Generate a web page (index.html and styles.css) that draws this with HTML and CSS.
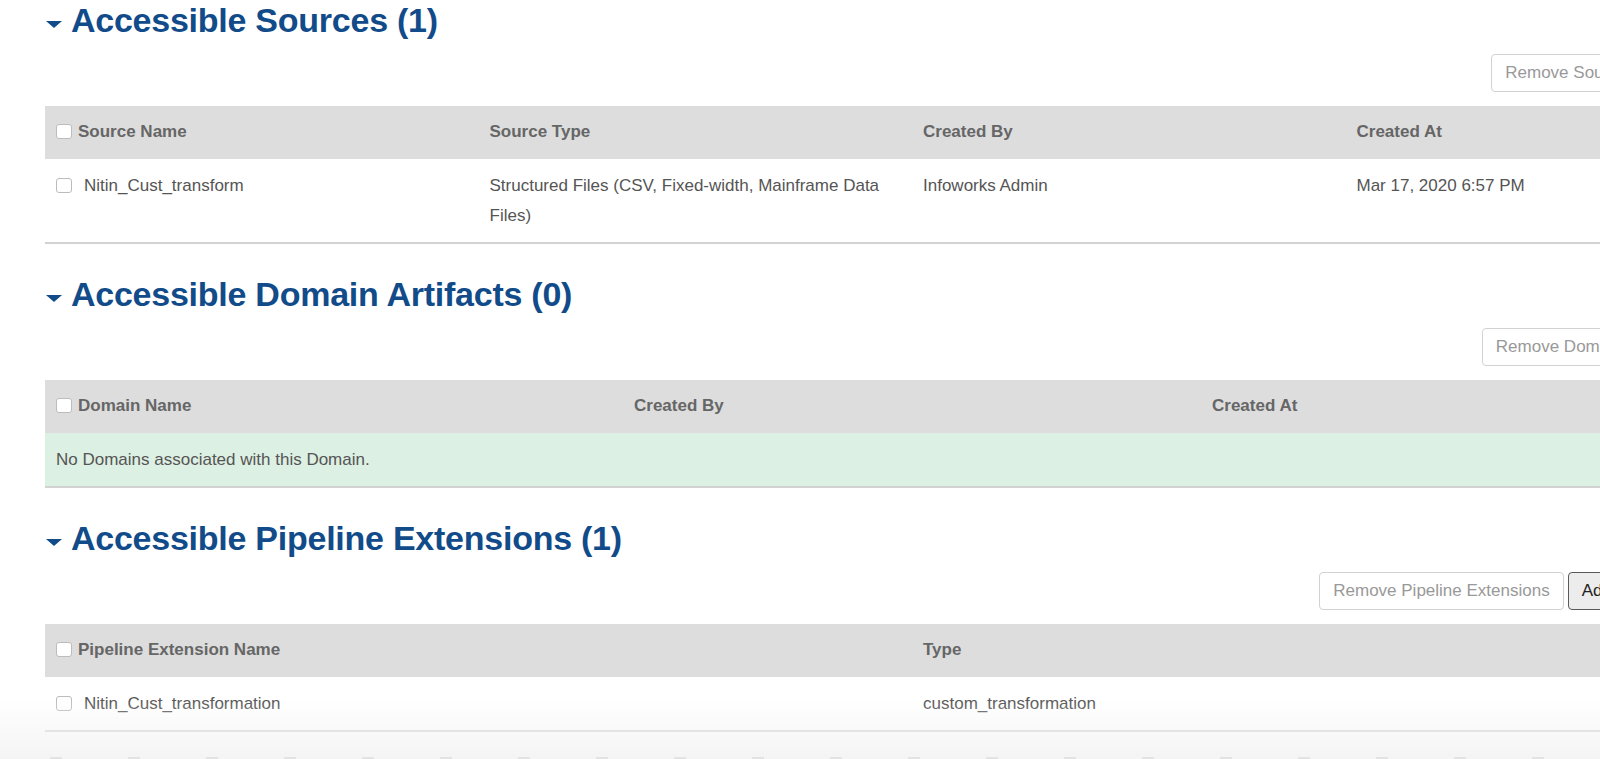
FILE: index.html
```html
<!DOCTYPE html>
<html lang="en">
<head>
    <meta charset="UTF-8">
    <meta name="viewport" content="width=device-width, initial-scale=1.0">
    <title>Domain Access</title>
    <link rel="stylesheet" href="styles.css">
</head>
<body>

<div class="page">

    <!-- Sources -->
    <section class="panel">
        <h2 class="panel-title"><span class="caret"></span>Accessible Sources (1)</h2>
        <div class="panel-actions">
            <button class="btn">Remove Sources</button>
            <button class="btn btn-add">Add Sources</button>
        </div>
        <table class="grid">
            <colgroup>
                <col style="width: 25%"><col style="width: 25%"><col style="width: 25%"><col style="width: 25%">
            </colgroup>
            <thead>
                <tr>
                    <th><input type="checkbox" class="check">Source Name</th>
                    <th>Source Type</th>
                    <th>Created By</th>
                    <th>Created At</th>
                </tr>
            </thead>
            <tbody>
                <tr>
                    <td><input type="checkbox" class="check">Nitin_Cust_transform</td>
                    <td>Structured Files (CSV, Fixed-width, Mainframe Data Files)</td>
                    <td>Infoworks Admin</td>
                    <td>Mar 17, 2020 6:57 PM</td>
                </tr>
            </tbody>
        </table>
    </section>

    <!-- Domain artifacts -->
    <section class="panel">
        <h2 class="panel-title"><span class="caret"></span>Accessible Domain Artifacts (0)</h2>
        <div class="panel-actions">
            <button class="btn">Remove Domains</button>
            <button class="btn btn-add">Add Domains</button>
        </div>
        <table class="grid">
            <colgroup>
                <col style="width: 33.333%"><col style="width: 33.333%"><col style="width: 33.333%">
            </colgroup>
            <thead>
                <tr>
                    <th><input type="checkbox" class="check">Domain Name</th>
                    <th>Created By</th>
                    <th>Created At</th>
                </tr>
            </thead>
            <tbody>
                <tr class="empty-row">
                    <td colspan="3">No Domains associated with this Domain.</td>
                </tr>
            </tbody>
        </table>
    </section>

    <!-- Pipeline extensions -->
    <section class="panel">
        <h2 class="panel-title"><span class="caret"></span>Accessible Pipeline Extensions (1)</h2>
        <div class="panel-actions">
            <button class="btn">Remove Pipeline Extensions</button>
            <button class="btn btn-add">Add Pipeline Extensions</button>
        </div>
        <table class="grid">
            <colgroup>
                <col style="width: 50%"><col style="width: 50%">
            </colgroup>
            <thead>
                <tr>
                    <th><input type="checkbox" class="check">Pipeline Extension Name</th>
                    <th>Type</th>
                </tr>
            </thead>
            <tbody>
                <tr>
                    <td><input type="checkbox" class="check">Nitin_Cust_transformation</td>
                    <td>custom_transformation</td>
                </tr>
            </tbody>
        </table>
    </section>

</div>

<div class="bottom-fade"></div>

</body>
</html>
```

FILE: styles.css
```css
html, body {
    margin: 0;
    overflow: hidden;
    background: #fff;
}

body {
    font-family: "Liberation Sans", Arial, sans-serif;
    font-size: 17px;
    color: #555;
}

.page {
    width: 1734px;
    padding-left: 45px;
}

.panel {
    margin-top: 30px;
}

.panel:first-child {
    margin-top: 0;
}

.panel-title {
    display: flex;
    align-items: center;
    margin: 0;
    padding-left: 1px;
    height: 40px;
    line-height: 40px;
    font-size: 34px;
    font-weight: bold;
    letter-spacing: -0.25px;
    color: #124b89;
}

.caret {
    width: 0;
    height: 0;
    margin: 8px 9px 0 0;
    border-left: 8px solid transparent;
    border-right: 8px solid transparent;
    border-top: 7px solid #124b89;
}

.panel-actions {
    display: flex;
    justify-content: flex-end;
    gap: 4px;
    margin: 14px 0;
}

.btn {
    font-family: inherit;
    font-size: 17px;
    height: 38px;
    padding: 0 13px;
    border: 1px solid #d2d2d2;
    border-radius: 4px;
    background: #fff;
    color: #999;
}

.btn-add {
    border-color: #5a5a5a;
    background: #ececec;
    color: #222;
}

/* Tables */
.grid {
    width: 100%;
    table-layout: fixed;
    border-collapse: collapse;
}

.grid th {
    background: #dddddd;
    color: #666;
    font-weight: bold;
    text-align: left;
    line-height: 30px;
    padding: 11px 11px 12px;
}

.grid td {
    line-height: 30px;
    padding: 12px 20px 11px 11px;
    border-bottom: 2px solid #d2d2d2;
    vertical-align: top;
}

.check {
    appearance: none;
    -webkit-appearance: none;
    width: 16px;
    height: 15px;
    margin: 0 12px 0 0;
    border: 1px solid #bcbcbc;
    border-radius: 3px;
    background: #fff;
    vertical-align: -2px;
}

.grid th .check {
    margin-right: 6px;
}

.empty-row td {
    background: #ddf0e4;
}

/* soft fade at the bottom of the window */
.bottom-fade {
    position: fixed;
    left: 0;
    right: 0;
    bottom: 0;
    height: 60px;
    pointer-events: none;
    background: linear-gradient(rgba(255, 255, 255, 0), #f4f4f4);
}

.bottom-fade::after {
    content: "";
    position: absolute;
    left: 0;
    right: 0;
    bottom: 0;
    height: 2px;
    background: repeating-linear-gradient(90deg, transparent 0 50px, #e3e3e3 50px 62px, transparent 62px 78px);
}
```
